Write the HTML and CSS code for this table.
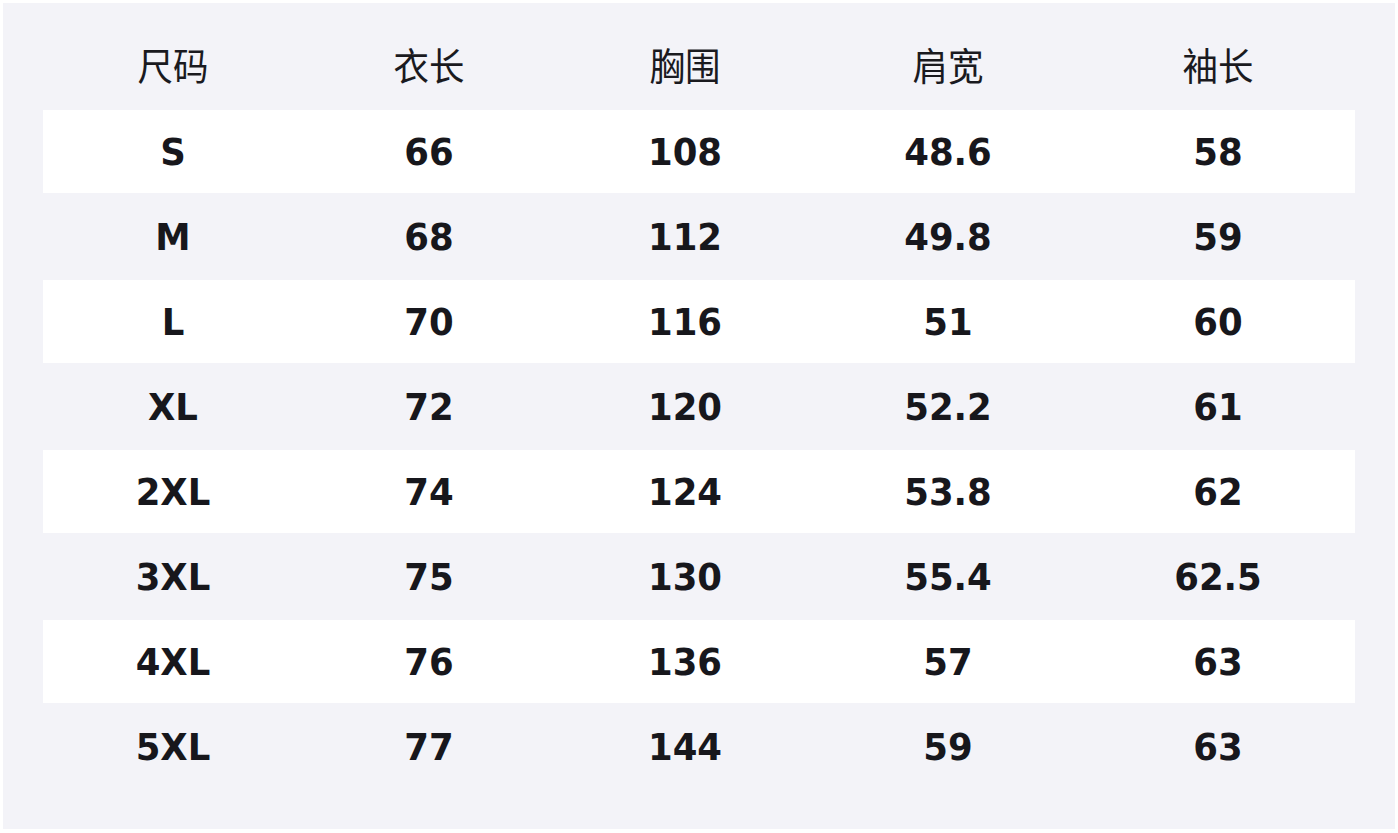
FILE: index.html
```html
<!DOCTYPE html>
<html lang="zh">
<head>
<meta charset="utf-8">
<title>尺码表</title>
<link rel="stylesheet" href="styles.css">
</head>
<body>
<div class="sheet">
  <table class="size-table">
    <colgroup>
      <col class="c1"><col class="c2"><col class="c3"><col class="c4"><col class="c5">
    </colgroup>
    <thead>
      <tr><th><span>尺码</span></th><th><span>衣长</span></th><th><span>胸围</span></th><th><span>肩宽</span></th><th><span>袖长</span></th></tr>
    </thead>
    <tbody>
      <tr><td><span>S</span></td><td><span>66</span></td><td><span>108</span></td><td><span>48.6</span></td><td><span>58</span></td></tr>
      <tr><td><span>M</span></td><td><span>68</span></td><td><span>112</span></td><td><span>49.8</span></td><td><span>59</span></td></tr>
      <tr><td><span>L</span></td><td><span>70</span></td><td><span>116</span></td><td><span>51</span></td><td><span>60</span></td></tr>
      <tr><td><span>XL</span></td><td><span>72</span></td><td><span>120</span></td><td><span>52.2</span></td><td><span>61</span></td></tr>
      <tr><td><span>2XL</span></td><td><span>74</span></td><td><span>124</span></td><td><span>53.8</span></td><td><span>62</span></td></tr>
      <tr><td><span>3XL</span></td><td><span>75</span></td><td><span>130</span></td><td><span>55.4</span></td><td><span>62.5</span></td></tr>
      <tr><td><span>4XL</span></td><td><span>76</span></td><td><span>136</span></td><td><span>57</span></td><td><span>63</span></td></tr>
      <tr><td><span>5XL</span></td><td><span>77</span></td><td><span>144</span></td><td><span>59</span></td><td><span>63</span></td></tr>
    </tbody>
  </table>
</div>
</body>
</html>
```
FILE: styles.css
```css
html, body {
  margin: 0;
  padding: 0;
  background: #ffffff;
}
body {
  padding: 3px;
}
.sheet {
  width: 1392px;
  height: 826px;
  box-sizing: border-box;
  background: #f3f3f8;
  padding: 20px 40px 0 40px;
}
.size-table {
  width: 1312px;
  border-collapse: separate;
  border-spacing: 0 2px;
  table-layout: fixed;
  color: #17171c;
}
.c1 { width: 260px; }
.c2 { width: 252px; }
.c3 { width: 260px; }
.c4 { width: 266px; }
.c5 { width: 274px; }
.size-table th,
.size-table td {
  height: 83px;
  padding: 0;
  text-align: center;
  vertical-align: middle;
}
.size-table th span,
.size-table td span {
  display: inline-block;
  transform: scaleY(1.06);
}
.size-table th {
  font-family: "Noto Sans CJK SC", "Noto Sans", sans-serif;
  font-weight: 400;
  font-size: 35.5px;
  color: #1a1a1f;
  padding-bottom: 6px;
  height: 77px;
}
.size-table td {
  font-family: "DejaVu Sans", sans-serif;
  font-weight: 700;
  font-size: 35.5px;
}
.size-table tbody tr:nth-child(odd) td {
  background: #ffffff;
}
```
